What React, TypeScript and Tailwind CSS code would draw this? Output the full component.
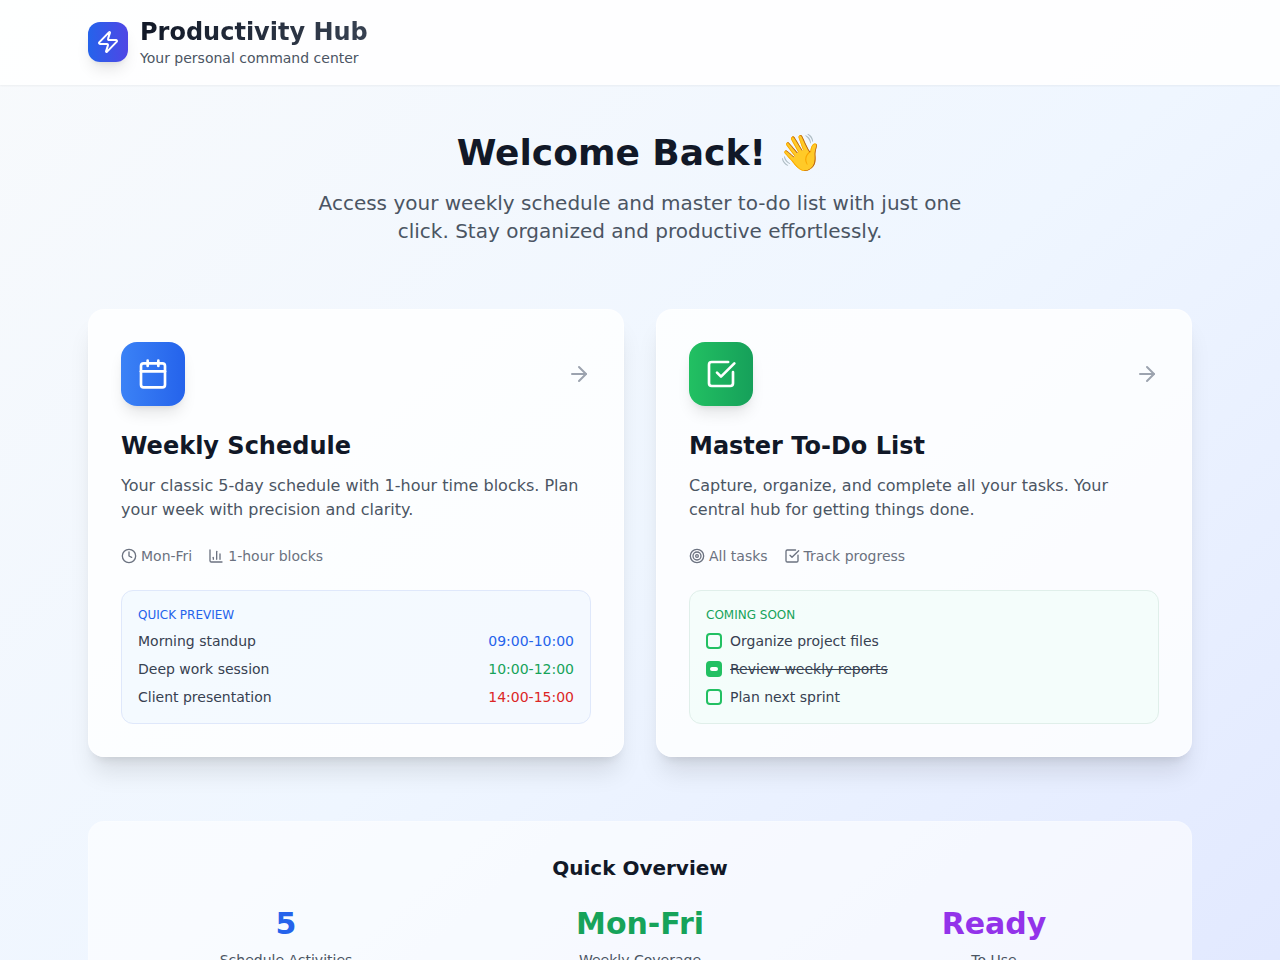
import type { ReactNode } from 'react'
import { ArrowRight, Calendar, ChartColumn, Clock, SquareCheckBig, Target, Zap } from 'lucide-react'

const schedule = [
  { name: 'Morning standup', time: '09:00-10:00', color: 'text-[#2563eb]' },
  { name: 'Deep work session', time: '10:00-12:00', color: 'text-[#16a35a]' },
  { name: 'Client presentation', time: '14:00-15:00', color: 'text-[#dc2626]' },
]

const tasks = [
  { id: 'task-files', name: 'Organize project files', done: false },
  { id: 'task-reports', name: 'Review weekly reports', done: true },
  { id: 'task-sprint', name: 'Plan next sprint', done: false },
]

const stats = [
  { value: '5', label: 'Schedule Activities', color: 'text-[#2563eb]' },
  { value: 'Mon-Fri', label: 'Weekly Coverage', color: 'text-[#16a35a]' },
  { value: 'Ready', label: 'To Use', color: 'text-[#9333ea]' },
]

type HubCardProps = {
  href: string
  title: string
  description: string
  icon: ReactNode
  iconClass: string
  meta: ReactNode
  children: ReactNode
}

function HubCard({ href, title, description, icon, iconClass, meta, children }: HubCardProps) {
  return (
    <article className="rounded-2xl border border-white/50 bg-white/80 p-8 shadow-[0_20px_25px_-5px_rgba(0,0,0,0.1),0_8px_10px_-6px_rgba(0,0,0,0.1)]">
      <div className="mb-6 flex items-center justify-between">
        <div className={`flex h-16 w-16 items-center justify-center rounded-2xl text-white shadow-lg ${iconClass}`}>
          {icon}
        </div>
        <a href={href} aria-label={title} className="text-[#9ca3af] hover:text-gray-600">
          <ArrowRight className="h-6 w-6" />
        </a>
      </div>
      <h3 className="mb-3 text-2xl font-bold text-[#111827]">{title}</h3>
      <p className="mb-6 text-base text-[#4b5563]">{description}</p>
      <div className="mb-6 flex items-center gap-4 text-sm text-[#6b7280]">{meta}</div>
      {children}
    </article>
  )
}

function MetaItem({ icon, text }: { icon: ReactNode; text: string }) {
  return (
    <div className="flex items-center gap-1">
      {icon}
      <span>{text}</span>
    </div>
  )
}

export default function App() {
  return (
    <div className="min-h-screen bg-linear-to-br/srgb from-[#f8fafc] via-[#eff6ff] to-[#e0e7ff] font-['DejaVu_Sans',sans-serif]">
      <header className="border-b border-white/20 bg-white/90 shadow-xs">
        <div className="mx-auto flex max-w-6xl items-center gap-3 px-6 py-4">
          <div className="flex h-10 w-10 items-center justify-center rounded-xl bg-linear-to-r/srgb from-[#2563eb] to-[#4f46e5] text-white shadow-lg">
            <Zap className="h-6 w-6" />
          </div>
          <div>
            <h1 className="bg-linear-to-r/srgb from-[#111827] to-[#374151] bg-clip-text text-2xl font-bold text-transparent">
              Productivity Hub
            </h1>
            <p className="text-sm text-[#4b5563]">Your personal command center</p>
          </div>
        </div>
      </header>

      <main className="mx-auto max-w-6xl px-6 pt-12 pb-24">
        <div className="mb-16 text-center">
          <h2 className="mb-4 text-4xl font-bold text-[#111827]">Welcome Back! 👋</h2>
          <p className="mx-auto max-w-2xl text-xl text-[#4b5563]">
            Access your weekly schedule and master to-do list with just one click. Stay organized and productive
            effortlessly.
          </p>
        </div>

        <div className="mb-16 grid gap-8 md:grid-cols-2">
          <HubCard
            href="#schedule"
            title="Weekly Schedule"
            description="Your classic 5-day schedule with 1-hour time blocks. Plan your week with precision and clarity."
            icon={<Calendar className="h-8 w-8" />}
            iconClass="bg-linear-to-r/srgb from-[#3b82f6] to-[#2563eb]"
            meta={
              <>
                <MetaItem icon={<Clock className="h-4 w-4" />} text="Mon-Fri" />
                <MetaItem icon={<ChartColumn className="h-4 w-4" />} text="1-hour blocks" />
              </>
            }
          >
            <div className="rounded-xl border border-[#dfe8fb] bg-[#eff6ff]/60 p-4">
              <div className="mb-2 text-xs text-[#2563eb]">QUICK PREVIEW</div>
              <ul className="space-y-2 text-sm">
                {schedule.map((item) => (
                  <li key={item.name} className="flex justify-between">
                    <span className="text-[#374151]">{item.name}</span>
                    <span className={item.color}>{item.time}</span>
                  </li>
                ))}
              </ul>
            </div>
          </HubCard>

          <HubCard
            href="#todo"
            title="Master To-Do List"
            description="Capture, organize, and complete all your tasks. Your central hub for getting things done."
            icon={<SquareCheckBig className="h-8 w-8" />}
            iconClass="bg-linear-to-r/srgb from-[#22c062] to-[#16a05a]"
            meta={
              <>
                <MetaItem icon={<Target className="h-4 w-4" />} text="All tasks" />
                <MetaItem icon={<SquareCheckBig className="h-4 w-4" />} text="Track progress" />
              </>
            }
          >
            <div className="rounded-xl border border-[#e0efea] bg-[#f0fdf8]/60 p-4">
              <div className="mb-2 text-xs text-[#16a35a]">COMING SOON</div>
              <ul className="space-y-2 text-sm text-[#374151]">
                {tasks.map((task) => (
                  <li key={task.id} className="flex items-center gap-2">
                    <input
                      id={task.id}
                      type="checkbox"
                      defaultChecked={task.done}
                      className="grid h-4 w-4 appearance-none place-items-center rounded border-2 border-[#22c062] before:h-1 before:w-2 before:rounded-sm before:bg-white checked:bg-[#22c062] checked:before:content-[''] not-checked:before:hidden"
                    />
                    <label htmlFor={task.id} className={task.done ? 'line-through' : ''}>
                      {task.name}
                    </label>
                  </li>
                ))}
              </ul>
            </div>
          </HubCard>
        </div>

        <section className="rounded-2xl border border-white/20 bg-white/60 p-8">
          <h3 className="mb-6 text-center text-xl font-bold text-[#111827]">Quick Overview</h3>
          <div className="grid gap-6 text-center md:grid-cols-3">
            {stats.map((stat) => (
              <div key={stat.label}>
                <div className={`mb-2 text-3xl font-bold ${stat.color}`}>{stat.value}</div>
                <div className="text-sm text-[#4b5563]">{stat.label}</div>
              </div>
            ))}
          </div>
        </section>
      </main>
    </div>
  )
}
